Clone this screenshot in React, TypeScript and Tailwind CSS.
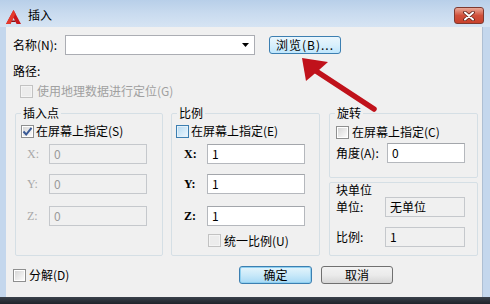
import React from 'react';

const FONT = { fontFamily: '"Noto Sans CJK SC", "Liberation Sans", sans-serif' };

type BoxProps = { checked?: boolean; disabled?: boolean; hover?: boolean };

const CheckBox: React.FC<BoxProps> = ({ checked, disabled, hover }) => (
  <div
    className={`w-[13px] h-[13px] shrink-0 border flex items-center justify-center ${
      disabled ? 'border-[#c2c2c2] bg-[#f4f4f4]' : hover ? 'border-[#3c7fb1] bg-[#e4f1fa]' : 'border-[#8e8f8f] bg-white'
    }`}
  >
    <div
      className={`w-[9px] h-[9px] flex items-center justify-center ${
        disabled
          ? 'bg-[#ececec]'
          : hover
          ? 'bg-gradient-to-br from-[#b9dcf3] to-[#e9f5fd]'
          : 'bg-gradient-to-br from-[#d7d7d7] to-[#fbfbfb]'
      }`}
    >
      {checked && (
        <svg width="11" height="11" viewBox="0 0 11 11" className="shrink-0">
          <path d="M1.5 5.5 L4.2 8.5 L9.5 1.8" fill="none" stroke="#3a5a96" strokeWidth="2" />
        </svg>
      )}
    </div>
  </div>
);

type FieldProps = { value: string; disabled?: boolean; readOnly?: boolean; width: string };

const Field: React.FC<FieldProps> = ({ value, disabled, readOnly, width }) => (
  <div
    className={`${width} h-[20px] border flex items-center pl-[4px] text-[12px] ${
      disabled
        ? 'border-[#c5c8cc] bg-[#f0f0f0] text-[#9a9a9a]'
        : readOnly
        ? 'border-[#c5c8cc] bg-[#f0f0f0] text-black'
        : 'border-[#b5b8bd] border-t-[#a3a6ab] bg-white text-black'
    }`}
  >
    {value}
  </div>
);

const Legend: React.FC<{ children: React.ReactNode }> = ({ children }) => (
  <legend className="ml-[5px] px-[2px] text-[12px] leading-[12px] text-black">{children}</legend>
);

const App: React.FC = () => {
  return (
    <div className="relative w-[490px] h-[304px] overflow-hidden flex flex-col bg-[#c4d7ed] select-none" style={FONT}>
      {/* Title bar */}
      <div className="h-[27px] shrink-0 flex items-start bg-gradient-to-b from-[#b8cfe9] via-[#c9dbef] to-[#d6e4f3]">
        <svg width="15" height="14" viewBox="0 0 15 14" className="ml-[6px] mt-[10px] shrink-0">
          <path d="M7.5 0 L15 14 L10.6 14 L7.5 7.8 L4.4 14 L0 14 Z" fill="#c8171c" />
          <path d="M7.5 0 L9.4 3.6 L7.5 7.8 L4.4 14 L0 14 Z" fill="#e53a2c" />
          <path d="M6 10.5 L9 10.5 L9.8 12 L5.2 12 Z" fill="#8c0d10" />
        </svg>
        <span className="ml-[7px] mt-[7px] text-[12px] leading-[16px] text-black">插入</span>
        <div className="ml-auto mr-[6px] mt-[7px] w-[30px] h-[17px] rounded-[3px] border border-[#7e3a30] bg-gradient-to-b from-[#e9a999] via-[#d0503b] to-[#c8412c] flex items-center justify-center">
          <svg width="12" height="10" viewBox="0 0 12 10">
            <path d="M2 1.5 L10 8.5 M10 1.5 L2 8.5" stroke="#5a2018" strokeWidth="3.6" strokeLinecap="round" />
            <path d="M2 1.5 L10 8.5 M10 1.5 L2 8.5" stroke="#ffffff" strokeWidth="2" strokeLinecap="round" />
          </svg>
        </div>
      </div>

      {/* Frame + client */}
      <div className="flex-1 flex pl-[6px] pr-[7px]">
        <div className="flex-1 bg-[#f0f0f0] border-r border-[#aebfd3] flex flex-col pl-[7px] text-[12px] text-black">
          {/* Name row */}
          <div className="mt-[8px] h-[20px] flex items-center">
            <span className="w-[52px] leading-[14px]">名称(N):</span>
            <div className="w-[190px] h-[20px] border border-[#abadb3] bg-white flex items-center justify-end pr-[5px]">
              <svg width="7" height="4" viewBox="0 0 7 4">
                <path d="M0 0 L7 0 L3.5 4 Z" fill="#000" />
              </svg>
            </div>
            <div className="ml-[14px] w-[72px] h-[18px] rounded-[3px] border border-[#3c7fb1] bg-gradient-to-b from-[#eaf6fd] via-[#d9f0fc] to-[#bee6fd] flex items-center justify-center leading-[14px] tracking-[1px]">
              浏览(B)...
            </div>
          </div>

          {/* Path */}
          <div className="mt-[9px] h-[14px] flex items-center leading-[14px]">路径:</div>

          {/* Geo checkbox */}
          <div className="mt-[6px] h-[14px] flex items-center ml-[7px]">
            <CheckBox disabled />
            <span className="ml-[4px] text-[#a0a0a0] leading-[14px]">使用地理数据进行定位(G)</span>
          </div>

          {/* Groups */}
          <div className="mt-[9px] ml-[2px] flex items-start">
            {/* Insertion point */}
            <fieldset className="w-[148px] h-[149px] border border-[#d5dfe5] rounded-[2px] flex flex-col">
              <Legend>插入点</Legend>
              <div className="mt-[5px] ml-[5px] h-[14px] flex items-center">
                <CheckBox checked />
                <span className="ml-[2px] leading-[14px]">在屏幕上指定(S)</span>
              </div>
              {[
                ['X:', 'mt-[6px]'],
                ['Y:', 'mt-[10px]'],
                ['Z:', 'mt-[12px]'],
              ].map(([l, m]) => (
                <div key={l} className={`${m} flex items-center pl-[11px]`}>
                  <span className="w-[22px] text-[#a8a8a8]" style={{ fontFamily: '"Liberation Serif", serif' }}>
                    {l}
                  </span>
                  <Field value="0" disabled width="w-[98px]" />
                </div>
              ))}
            </fieldset>

            {/* Scale */}
            <fieldset className="ml-[8px] w-[149px] h-[149px] border border-[#d5dfe5] rounded-[2px] flex flex-col">
              <Legend>比例</Legend>
              <div className="mt-[5px] ml-[4px] h-[14px] flex items-center">
                <CheckBox hover />
                <span className="ml-[2px] leading-[14px]">在屏幕上指定(E)</span>
              </div>
              {[
                ['X:', 'mt-[6px]'],
                ['Y:', 'mt-[10px]'],
                ['Z:', 'mt-[12px]'],
              ].map(([l, m]) => (
                <div key={l} className={`${m} flex items-center pl-[12px]`}>
                  <span className="w-[23px] font-bold" style={{ fontFamily: '"Liberation Serif", serif' }}>
                    {l}
                  </span>
                  <Field value="1" width="w-[98px]" />
                </div>
              ))}
              <div className="mt-[8px] ml-[36px] h-[13px] flex items-center">
                <CheckBox disabled />
                <span className="ml-[3px] leading-[14px]">统一比例(U)</span>
              </div>
            </fieldset>

            {/* Right column */}
            <div className="ml-[9px] w-[149px] flex flex-col">
              <fieldset className="h-[71px] border border-[#d5dfe5] rounded-[2px] flex flex-col">
                <Legend>旋转</Legend>
                <div className="mt-[6px] ml-[6px] h-[14px] flex items-center">
                  <CheckBox />
                  <span className="ml-[3px] leading-[14px]">在屏幕上指定(C)</span>
                </div>
                <div className="mt-[4px] ml-[6px] flex items-center">
                  <span className="w-[51px] leading-[14px]">角度(A):</span>
                  <Field value="0" width="w-[78px]" />
                </div>
              </fieldset>
              <div className="mt-[4px] h-[74px] border border-[#d5dfe5] rounded-[2px] flex flex-col pl-[6px]">
                <div className="leading-[12px] mt-[1px]">块单位</div>
                <div className="mt-[1px] flex items-center">
                  <span className="w-[49px] leading-[14px]">单位:</span>
                  <Field value="无单位" readOnly width="w-[80px]" />
                </div>
                <div className="mt-[10px] flex items-center">
                  <span className="w-[49px] leading-[14px]">比例:</span>
                  <Field value="1" readOnly width="w-[80px]" />
                </div>
              </div>
            </div>
          </div>

          {/* Bottom row */}
          <div className="mt-[10px] h-[18px] flex items-center">
            <div className="w-[226px] flex items-center">
              <CheckBox />
              <span className="ml-[3px] leading-[14px]">分解(D)</span>
            </div>
            <div className="w-[73px] h-[18px] rounded-[3px] border border-[#3c7fb1] bg-gradient-to-b from-[#e5f4fc] via-[#c9e9f9] to-[#a7d9f5] shadow-[inset_0_0_0_1px_#8fd0f0] flex items-center justify-center leading-[14px]">
              确定
            </div>
            <div className="ml-[9px] w-[72px] h-[18px] rounded-[3px] border border-[#707070] bg-gradient-to-b from-[#f2f2f2] via-[#ebebeb] to-[#d6d6d6] flex items-center justify-center leading-[14px]">
              取消
            </div>
          </div>
        </div>
      </div>

      {/* Taskbar strip */}
      <div className="h-[7px] shrink-0 bg-gradient-to-b from-[#3a414b] to-[#1f242b]" />

      {/* Red annotation arrow */}
      <svg className="absolute inset-0 pointer-events-none" width="490" height="304" viewBox="0 0 490 304">
        <path d="M316 71 L374 109" stroke="#c0121b" strokeWidth="5.5" strokeLinecap="round" />
        <path d="M302 58 L328 62 L319 70 L306 81 Z" fill="#c0121b" />
      </svg>
    </div>
  );
};

export default App;
